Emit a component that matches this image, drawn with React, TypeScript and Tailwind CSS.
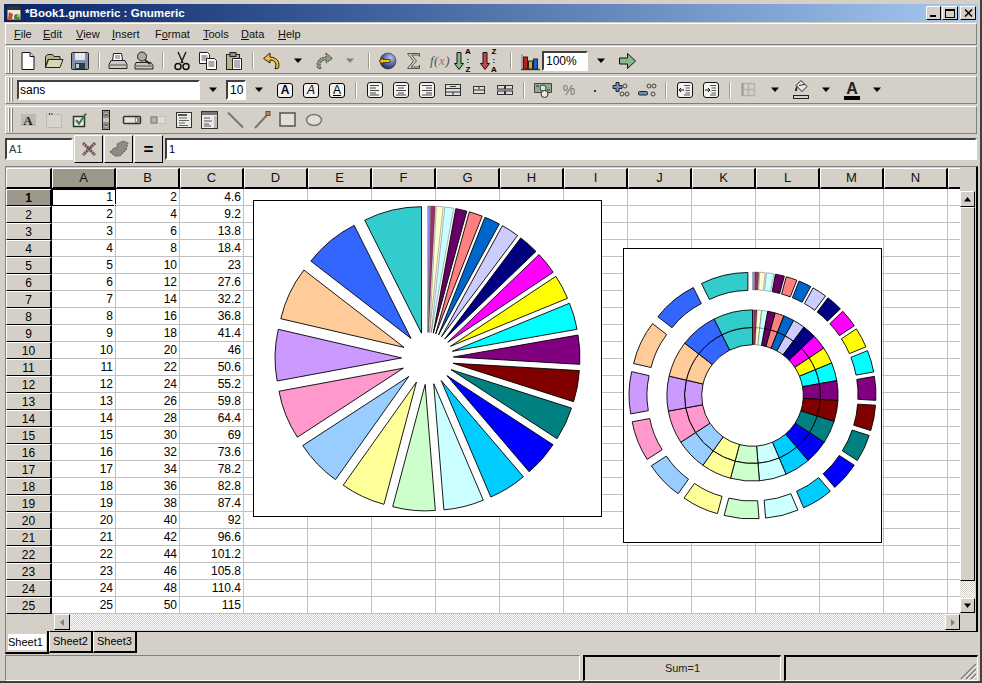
import React from 'react';

const colors = ['#9999ff','#993366','#ffffcc','#ccffff','#660066','#ff8080','#0066cc','#ccccff','#000080','#ff00ff','#ffff00','#00ffff','#800080','#800000','#008080','#0000ff','#00ccff','#ccffff','#ccffcc','#ffff99','#99ccff','#ff99cc','#cc99ff','#ffcc99','#3366ff','#33cccc'];
const total = 351;

// annular wedge, angles in degrees clockwise from 12 o'clock
function wedge(cx: number, cy: number, r0: number, r1: number, a0: number, a1: number, off: number) {
  const rad = (d: number) => (d * Math.PI) / 180;
  const mid = rad((a0 + a1) / 2);
  const ox = cx + off * Math.sin(mid);
  const oy = cy - off * Math.cos(mid);
  const pt = (r: number, a: number) => `${(ox + r * Math.sin(rad(a))).toFixed(2)} ${(oy - r * Math.cos(rad(a))).toFixed(2)}`;
  if (r0 === 0) return `M${ox.toFixed(2)} ${oy.toFixed(2)}L${pt(r1, a0)}A${r1} ${r1} 0 0 1 ${pt(r1, a1)}Z`;
  return `M${pt(r0, a0)}L${pt(r1, a0)}A${r1} ${r1} 0 0 1 ${pt(r1, a1)}L${pt(r0, a1)}A${r0} ${r0} 0 0 0 ${pt(r0, a0)}Z`;
}

function Slices({ cx, cy, r0, r1, off }: { cx: number; cy: number; r0: number; r1: number; off: number }) {
  let a = 0;
  return (
    <>
      {colors.map((c, i) => {
        const a0 = a;
        a += ((i + 1) / total) * 360;
        return <path key={i} d={wedge(cx, cy, r0, r1, a0, a, off)} fill={c} stroke="#000" strokeWidth={i < 4 ? 0.3 : 0.9} />;
      })}
    </>
  );
}

const raised = 'border border-t-white border-l-white border-r-black border-b-black';
const sunken = 'border-2 border-t-[#404040] border-l-[#404040] border-r-white border-b-white';
const sans = "font-['Liberation_Sans',Arial,sans-serif]";

function S({ children }: { children: React.ReactNode }) {
  return <svg width="22" height="22" viewBox="0 0 22 22">{children}</svg>;
}

function Btn({ children, className }: { children?: React.ReactNode; className?: string }) {
  return <div className={`flex items-center justify-center h-[26px] w-[26px] ${className ?? ''}`}>{children}</div>;
}

function Drop({ off, className }: { off?: boolean; className?: string }) {
  return (
    <Btn className={className}>
      <svg width="10" height="6" viewBox="0 0 10 6"><path d="M1 0.500h8L5 5z" fill={off ? '#808080' : '#000'} /></svg>
    </Btn>
  );
}

function Sep() {
  return (
    <div className="flex items-center justify-center w-[12px]">
      <div className="w-[2px] h-[16px] bg-white border-l border-[#a09c94]" />
    </div>
  );
}

function Handle() {
  return (
    <div className="flex gap-[1px] ml-[2px] mr-[2px] h-[24px] w-[5px]">
      <div className="w-[2px] bg-white border-r border-[#808080]" />
      <div className="w-[2px] bg-white border-r border-[#808080]" />
    </div>
  );
}

function Bar({ children, className }: { children: React.ReactNode; className?: string }) {
  return (
    <div className={`flex items-center h-[28px] w-[972px] ml-[1px] border-t border-l border-white border-b border-r border-b-[#808080] border-r-[#808080] ${className ?? ''}`}>
      <Handle />
      {children}
    </div>
  );
}

const NewIcon = <S><path d="M5 2.500h8l4 4v13H5z" fill="#fff" stroke="#111" /><path d="M13 2.500v4h4" fill="#ddd" stroke="#111" /></S>;
const OpenIcon = <S><path d="M2.500 17.500v-11l2-2h5l1.500 2h6v3h-12l-2.500 8z" fill="#b5b38c" stroke="#222" /><path d="M2.500 17.500l3-8h14.500l-3 8z" fill="#d9d7b4" stroke="#222" /></S>;
const SaveIcon = <S><rect x="2.500" y="2.500" width="17" height="17" rx="1" fill="#7f93ad" stroke="#222" /><rect x="6" y="3" width="10" height="7" fill="#e8e8e8" /><rect x="6" y="13" width="10" height="6" fill="#333a48" /><rect x="7" y="14" width="3" height="4" fill="#c8c8c8" /></S>;
const PrintIcon = <S><path d="M6.500 3.500h8l1 7h-10z" fill="#fff" stroke="#222" /><path d="M8 6h5M8 8h5" stroke="#666" /><path d="M4 10.500h14l2 4v4H2v-4z" fill="#c9c7c0" stroke="#222" /><path d="M3 15h16" stroke="#555" /></S>;
const PreviewIcon = <S><path d="M3 12.500h15l2 3v3.500H2v-3.500z" fill="#c9c7c0" stroke="#222" /><path d="M3 16h16" stroke="#555" /><circle cx="9" cy="6.500" r="4.500" fill="#a8aca4" stroke="#222" /><path d="M12 10l5 4" stroke="#222" strokeWidth="2" /></S>;
const CutIcon = <S><path d="M7 2l5 11M15 2l-5 11" stroke="#222" strokeWidth="1.500" fill="none" /><circle cx="7" cy="16.500" r="3" fill="none" stroke="#111" strokeWidth="1.500" /><circle cx="15" cy="16.500" r="3" fill="none" stroke="#111" strokeWidth="1.500" /></S>;
const CopyIcon = <S><path d="M2.500 2.500h8l2 2v9h-10z" fill="#fff" stroke="#222" /><path d="M4.500 6h6M4.500 8h6M4.500 10h6" stroke="#555" /><path d="M9.500 8.500h8l2 2v9h-10z" fill="#fff" stroke="#222" /><path d="M11.500 12h6M11.500 14h6M11.500 16h6" stroke="#555" /></S>;
const PasteIcon = <S><rect x="3.500" y="4.500" width="13" height="15" fill="#bdb48c" stroke="#222" /><rect x="7" y="2.500" width="6" height="4" fill="#8f8f86" stroke="#222" /><path d="M9.500 8.500h9v11h-9z" fill="#fff" stroke="#222" /><path d="M11 11h6M11 13h6M11 15h6M11 17h6" stroke="#666" /></S>;
const UndoIcon = <S><path d="M9 3L2.500 8.500 9 13v-3c3.500 0 5.500 1.500 6 5l-1 4 3.500-1c1.500-5-.5-10.500-8.500-11z" fill="#f4bc28" stroke="#222" /></S>;
const RedoIcon = <S><path d="M13 3l6.500 5.500L13 13v-3c-3.500 0-5.500 1.500-6 5l1 4-3.500-1C3 13 5 7.500 13 7z" fill="#8a9a7c" stroke="#4a4a40" strokeDasharray="2 1" /></S>;
const GlobeIcon = (
  <S>
    <defs><radialGradient id="gl" cx="0.65" cy="0.3" r="0.8"><stop offset="0" stopColor="#b6c4ea" /><stop offset="0.6" stopColor="#4a5a94" /><stop offset="1" stopColor="#1a1f48" /></radialGradient></defs>
    <circle cx="11" cy="11" r="8" fill="url(#gl)" stroke="#222" strokeWidth="0.500" />
    <path d="M2 11l4-3v1.500h7v3H6V14z" fill="#f2c200" stroke="#222" strokeWidth="0.700" />
  </S>
);
const SigmaIcon = <S><path d="M4.500 3.500h12v3l-1-1.500H8.500l5 6-5.500 6h7.500l1-2v3.500h-12l6-7.500z" fill="#d8d8c8" stroke="#55554a" /></S>;
const FxIcon = (
  <div className="font-['Liberation_Serif',serif] italic text-[13px] text-[#505050] whitespace-nowrap tracking-[0.5px]">
    f(<span className="text-[#c06060]">x</span>)
  </div>
);
const sortLetter = "font-['Liberation_Sans',Arial,sans-serif] text-[8px] font-bold leading-none";
function SortIcon({ top, bottom, fill }: { top: string; bottom: string; fill: string }) {
  return (
    <div className="flex items-center w-[22px] h-[22px] -ml-[2px]">
      <svg width="10" height="20" viewBox="0 0 10 20"><path d="M3 1.500h4v11h2.500L5 18.500.5 12.500H3z" fill={fill} stroke="#111" /></svg>
      <div className="flex flex-col items-center ml-[1px] gap-[2px]">
        <span className={sortLetter}>{top}</span>
        <span className={`${sortLetter} text-[6px] -my-[1px]`}>:</span>
        <span className={sortLetter}>{bottom}</span>
      </div>
    </div>
  );
}
const ChartIcon = <S><path d="M2 19.500h19" stroke="#444" strokeWidth="1.500" /><rect x="4.500" y="7" width="4" height="12" fill="#b82020" stroke="#222" /><rect x="9.500" y="11" width="4" height="8" fill="#f0a020" stroke="#222" /><rect x="14.500" y="9" width="4" height="10" fill="#2060c0" stroke="#222" /><path d="M3 4v15" stroke="#777" /></S>;
const GoIcon = <S><path d="M3.500 8h8V3.500l8 7.500-8 7.500V14h-8z" fill="#88b888" stroke="#111" /></S>;

function LetterBtn({ className }: { className: string }) {
  return (
    <div className="flex items-center justify-center w-[26px]">
      <div className={`w-[16px] h-[15px] bg-white/70 border border-black rounded-[3px] flex items-center justify-center text-[12px] leading-none text-black ${sans} ${className}`}>A</div>
    </div>
  );
}
function AlignBtn({ lines }: { lines: string }) {
  return (
    <Btn>
      <svg width="18" height="18" viewBox="0 0 18 18">
        <rect x="1.500" y="1.500" width="15" height="15" rx="2.500" fill="#f4f3f0" stroke="#111" />
        <path d={lines} stroke="#444" />
      </svg>
    </Btn>
  );
}
const MergeIcon = <S><rect x="3.500" y="5.500" width="15" height="11" fill="#ddd" stroke="#333" /><path d="M3.500 9.500h15M3.500 13h15M11 13v3.500M8 7.500h6" stroke="#333" /></S>;
const SplitIcon = <S><rect x="5.500" y="7.500" width="11" height="7" fill="#ddd" stroke="#333" /><path d="M5.500 11h11M11 7.500v3" stroke="#333" /></S>;
const Split2Icon = <S><rect x="3.500" y="6.500" width="7" height="3.500" fill="#ddd" stroke="#333" /><rect x="11.500" y="6.500" width="7" height="3.500" fill="#ddd" stroke="#333" /><rect x="3.500" y="12" width="7" height="3.500" fill="#ddd" stroke="#333" /><rect x="11.500" y="12" width="7" height="3.500" fill="#ddd" stroke="#333" /></S>;
const MoneyIcon = <S><path d="M2.500 4.500h17v9h-17z" fill="#8cab8c" stroke="#444" /><circle cx="11" cy="9" r="3" fill="#d8e4d0" stroke="#444" /><circle cx="12.500" cy="15" r="3.500" fill="#e8e8e8" stroke="#333" /><path d="M4 7h3M15 11h3" stroke="#333" /></S>;
const PercentIcon = <div className={`text-[14px] leading-none text-[#777] ${sans}`}>%</div>;
const DotIcon = <div className="w-[2px] h-[2px] bg-[#333] mt-[2px]" />;
function DecIcon({ plus }: { plus: boolean }) {
  return (
    <S>
      {plus
        ? <path d="M6 3.500h3v3h3v3H9v3H6v-3H3v-3h3z" fill="#6f8fb8" stroke="#223" />
        : <rect x="2.500" y="12.500" width="9" height="3.500" rx="1" fill="#6f8fb8" stroke="#223" />}
      <g fill="none" stroke="#444">
        {plus ? <><circle cx="15" cy="7" r="2" /><circle cx="12" cy="15" r="2" /><circle cx="17" cy="15" r="2" /></>
          : <><circle cx="13" cy="7" r="2" /><circle cx="18" cy="7" r="2" /><circle cx="17" cy="15" r="2" /></>}
      </g>
    </S>
  );
}
function IndentIcon({ flip }: { flip?: boolean }) {
  return (
    <Btn>
      <svg width="18" height="18" viewBox="0 0 18 18">
        <rect x="1.500" y="1.500" width="15" height="15" rx="2.500" fill="#f4f3f0" stroke="#111" />
        <path d="M8 4.500h6M9.500 7h4.500M9.500 9.500h4.500M9.500 12h4.500M8 14h6" stroke="#555" />
        <path d={flip ? 'M3 9h5M6 7l2 2-2 2' : 'M3 9h5M5 7L3 9l2 2'} stroke="#111" fill="none" />
      </svg>
    </Btn>
  );
}
const BordersIcon = <S><path d="M4.500 4.500h12v12h-12zM10.500 4.500v12M4.500 10.500h12" fill="none" stroke="#b4b2aa" strokeWidth="1.500" /><path d="M4.500 4.500v12" stroke="#9a9890" strokeWidth="2" /></S>;
const FillIcon = <S><path d="M11 1.500l6 6-5 5-6-6z" fill="#e8e8e8" stroke="#222" /><path d="M9 6.500l5.500-1" stroke="#222" /><path d="M7.500 6L5 10v2h2z" fill="#333" /><rect x="3.500" y="16.500" width="15" height="3" fill="#d4d0c8" stroke="#222" /></S>;
const FontColorIcon = (
  <div className="flex flex-col items-center w-[18px]">
    <span className={`text-[16px] font-bold leading-[15px] text-[#222] ${sans}`}>A</span>
    <div className="w-[16px] h-[4px] bg-black" />
  </div>
);

const LabelIcon = <div className="w-[15px] h-[12px] bg-[#bdb9b0] flex items-center justify-center font-['Liberation_Serif',serif] font-bold text-[13px] leading-none text-[#222]">A</div>;
const FrameIcon = <S><path d="M3.500 5.500h15v13h-15z" fill="#d8d4cc" stroke="#bbb8b0" /><rect x="6" y="3" width="5" height="3" fill="#d4d0c8" /><path d="M6.500 4v2M9 4v2" stroke="#333" /></S>;
const CheckIcon = <S><rect x="4.500" y="7.500" width="11" height="10" fill="#e8e8e0" stroke="#333" strokeWidth="1.500" /><path d="M7 11l3 3.500 7-10" stroke="#3a7a3a" strokeWidth="2" fill="none" /></S>;
const SpinIcon = <S><rect x="7.500" y="1.500" width="7" height="19" fill="#c8c4bc" stroke="#222" /><rect x="9" y="3" width="4" height="5" fill="#e8e8e8" stroke="#555" /><rect x="9" y="14" width="4" height="5" fill="#e8e8e8" stroke="#555" /><path d="M9.500 6.500l1.500-2 1.500 2zM9.500 15.500l1.500 2 1.500-2z" fill="#000" /></S>;
const ScrollIcon = <S><rect x="2.500" y="7.500" width="17" height="7" rx="1" fill="#e4e2dc" stroke="#333" strokeWidth="1.500" /><rect x="14" y="8" width="5" height="6" fill="#888" /><path d="M15.500 9.500v3" stroke="#fff" /></S>;
const SliderIcon = <S><rect x="3.500" y="7.500" width="15" height="7" fill="#dedcd6" stroke="#c4c2ba" /><rect x="4" y="8" width="6" height="6" fill="#b4b2aa" stroke="#777" /></S>;
const ListIcon = <S><rect x="3.500" y="3.500" width="15" height="15" fill="#ecebe8" stroke="#333" /><rect x="5" y="5" width="9" height="2" fill="#555" /><path d="M6 9h8M6 11.500h10M6 14h6M6 16.500h9" stroke="#666" /></S>;
const ComboIcon = <S><rect x="2.500" y="2.500" width="16" height="17" fill="#ecebe8" stroke="#333" /><rect x="3" y="3" width="15" height="3" fill="#777" /><rect x="15" y="7" width="3" height="12" fill="#bbb" /><path d="M5 9h6M5 12h8M5 15h5M5 17h7" stroke="#555" /></S>;
const LineIcon = <S><path d="M3 3.500l15 15" stroke="#77756e" strokeWidth="2" /></S>;
const ArrowIcon = <S><path d="M4 19L17 5" stroke="#77756e" strokeWidth="2" /><rect x="15" y="2.500" width="4" height="4" fill="#b88a50" stroke="#555" /></S>;
const RectIcon = <S><rect x="3" y="4" width="15" height="13" fill="#e0ded8" stroke="#55534e" strokeWidth="1.500" /></S>;
const EllipseIcon = <S><ellipse cx="11" cy="11" rx="7.500" ry="5.500" fill="#e0ded8" stroke="#77756e" strokeWidth="1.500" /></S>;

const columns = ['A','B','C','D','E','F','G','H','I','J','K','L','M','N'];
const rows = Array.from({ length: 25 }, (_, i) => i + 1);
const fmtC = (n: number) => String(Math.round(n * 46) / 10);

function ColHead({ label, active }: { label: string; active?: boolean }) {
  return (
    <div className={`w-[64px] h-full flex items-center justify-center border-t border-l border-t-white border-l-white border-r-2 border-r-black border-b-2 border-b-black text-[13px] text-[#111] ${active ? 'bg-[#9d988c]' : ''}`}>{label}</div>
  );
}

function GridRow({ n }: { n: number }) {
  return (
    <div className="flex h-[17px]">
      <div className={`w-[46px] flex items-center justify-center border-t border-l border-t-white border-l-white border-r-2 border-r-black border-b border-b-black text-[12px] leading-none ${n === 1 ? 'bg-[#9d988c] font-bold' : 'bg-[#d4d0c8]'}`}>{n}</div>
      {columns.map((c, i) => (
        <div key={c} className={`relative w-[64px] flex items-center justify-end pr-[2px] border-r border-b border-[#c0c0c0] text-[12px] leading-none bg-white ${n === 1 && i === 0 ? 'outline-2 -outline-offset-1 outline-black' : ''}`}>
          {i === 0 ? n : i === 1 ? n * 2 : i === 2 ? fmtC(n) : ''}
          {n === 1 && i === 0 && <div className="absolute right-[-3px] bottom-[-3px] w-[4px] h-[4px] bg-black border border-white" />}
        </div>
      ))}
      <div className="w-[12px] border-b border-[#c0c0c0] bg-white" />
    </div>
  );
}

const checker = 'bg-[repeating-conic-gradient(#d4d0c8_0_25%,#ffffff_0_50%)] bg-[length:2px_2px]';

function ScrollBtn({ d, grey, className }: { d: string; grey?: boolean; className: string }) {
  return (
    <div className={`bg-[#d4d0c8] flex items-center justify-center ${raised} ${className}`}>
      <svg width="9" height="9" viewBox="0 0 9 9"><path d={d} fill={grey ? '#808080' : '#000'} /></svg>
    </div>
  );
}

export default function App() {
  const menus: [string, string, string, number][] = [
    ['', 'F', 'ile', 29], ['', 'E', 'dit', 33], ['', 'V', 'iew', 36], ['', 'I', 'nsert', 43],
    ['F', 'o', 'rmat', 48], ['', 'T', 'ools', 38], ['', 'D', 'ata', 37], ['', 'H', 'elp', 30],
  ];
  return (
    <div className={`relative w-[982px] h-[683px] overflow-hidden bg-[#d4d0c8] pt-[4px] pl-[4px] border-r-2 border-b-2 border-[#404040] text-black ${sans}`}>
      {/* title bar */}
      <div className="flex items-center w-[974px] h-[18px] mb-[1px] bg-gradient-to-r from-[#0a246a] to-[#a6caf0] text-white">
        <svg className="ml-[2px]" width="16" height="16" viewBox="0 0 16 16">
          <rect x="1" y="1" width="14" height="14" fill="#e8e8e8" stroke="#222" />
          <rect x="1" y="1" width="14" height="4" fill="#333" />
          <path d="M3 7l4 2-1 5H2z" fill="#d84830" />
          <circle cx="11" cy="12" r="3" fill="#3a8a50" />
          <path d="M11 9a3 3 0 0 1 3 3h-3z" fill="#e0b020" />
        </svg>
        <span className="ml-[3px] text-[11.6px] font-bold leading-none whitespace-nowrap">*Book1.gnumeric : Gnumeric</span>
        <div className="ml-auto flex mr-[2px]">
          <div className={`w-[15px] h-[14px] bg-[#d4d0c8] relative ${raised}`}><div className="absolute left-[3px] bottom-[2px] w-[6px] h-[2px] bg-black" /></div>
          <div className={`w-[16px] h-[14px] ml-[1px] bg-[#d4d0c8] flex items-center justify-center ${raised}`}><div className="w-[10px] h-[9px] border border-black border-t-2" /></div>
          <div className={`w-[16px] h-[14px] ml-[2px] bg-[#d4d0c8] flex items-center justify-center ${raised}`}>
            <svg width="9" height="8" viewBox="0 0 9 8"><path d="M1 0.500l7 7M8 0.500l-7 7" stroke="#000" strokeWidth="1.500" /></svg>
          </div>
        </div>
      </div>

      {/* menu */}
      <div className="flex items-center w-[972px] h-[22px] ml-[1px] mb-[1px] pl-[8px] border border-t-white border-l-white border-b-[#808080] border-r-[#808080] text-[11px] text-[#111]">
        {menus.map(([a, u, b, w]) => (
          <span key={u + b} style={{ width: w }}>{a}<span className="underline">{u}</span>{b}</span>
        ))}
      </div>

      {/* standard toolbar */}
      <Bar className="mb-[2px] pt-[1px]">
        <Btn>{NewIcon}</Btn><Btn>{OpenIcon}</Btn><Btn>{SaveIcon}</Btn><Sep />
        <Btn>{PrintIcon}</Btn><Btn>{PreviewIcon}</Btn><Sep />
        <Btn>{CutIcon}</Btn><Btn>{CopyIcon}</Btn><Btn>{PasteIcon}</Btn><Sep />
        <Btn>{UndoIcon}</Btn><Drop /><Btn>{RedoIcon}</Btn><Drop off /><Sep />
        <Btn>{GlobeIcon}</Btn><Btn>{SigmaIcon}</Btn><Btn>{FxIcon}</Btn>
        <Btn><SortIcon top="A" bottom="Z" fill="#88b888" /></Btn>
        <Btn><SortIcon top="Z" bottom="A" fill="#cc4444" /></Btn><Sep />
        <Btn>{ChartIcon}</Btn>
        <div className={`w-[46px] h-[20px] -ml-[1px] pl-[2px] flex items-center bg-white text-[12px] ${sunken}`}>100%</div>
        <Drop /><Btn>{GoIcon}</Btn>
      </Bar>

      {/* format toolbar */}
      <Bar className="mb-[2px]">
        <div className={`w-[183px] h-[20px] ml-[2px] pl-[1px] flex items-center bg-white text-[12px] ${sunken}`}>sans</div>
        <Drop />
        <div className={`w-[20px] h-[20px] pl-[2px] flex items-center bg-white text-[12px] ${sunken}`}>10</div>
        <Drop />
        <LetterBtn className="font-bold" /><LetterBtn className="italic" /><LetterBtn className="underline" /><Sep />
        <AlignBtn lines="M4 4.500h9M4 7h6M4 9.500h9M4 12h6M4 14h9" />
        <AlignBtn lines="M4 4.500h10M6 7h6M4 9.500h10M6 12h6M4 14h10" />
        <AlignBtn lines="M4 4.500h10M8 7h6M4 9.500h10M8 12h6M4 14h10" />
        <Btn>{MergeIcon}</Btn><Btn>{SplitIcon}</Btn><Btn>{Split2Icon}</Btn><Sep />
        <Btn>{MoneyIcon}</Btn><Btn>{PercentIcon}</Btn><Btn>{DotIcon}</Btn>
        <Btn><DecIcon plus /></Btn><Btn><DecIcon plus={false} /></Btn><Sep />
        <IndentIcon /><IndentIcon flip /><Sep />
        <Btn>{BordersIcon}</Btn><Drop /><Btn>{FillIcon}</Btn>
        <Drop className="-ml-[1px]" /><Btn>{FontColorIcon}</Btn><Drop className="-ml-[1px]" />
      </Bar>

      {/* object toolbar */}
      <Bar className="mb-[1px]">
        <Btn>{LabelIcon}</Btn><Btn>{FrameIcon}</Btn><Btn>{CheckIcon}</Btn><Btn>{SpinIcon}</Btn>
        <Btn>{ScrollIcon}</Btn><Btn>{SliderIcon}</Btn><Btn>{ListIcon}</Btn><Btn>{ComboIcon}</Btn>
        <Btn>{LineIcon}</Btn><Btn>{ArrowIcon}</Btn><Btn>{RectIcon}</Btn><Btn>{EllipseIcon}</Btn>
      </Bar>

      {/* formula bar */}
      <div className="flex items-center h-[28px] mb-[3px] w-[974px] pl-[1px]">
        <div className={`w-[68px] h-[22px] pl-[2px] flex items-center bg-white text-[11px] text-[#333] ${sunken}`}>A1</div>
        <div className={`w-[29px] h-[28px] ml-[1px] flex items-center justify-center ${raised}`}>
          <svg width="18" height="18" viewBox="0 0 18 18"><path d="M3 3l12 12M15 3L3 15" stroke="#6a5050" strokeWidth="3" strokeDasharray="2 0.600" /></svg>
        </div>
        <div className={`w-[29px] h-[28px] ml-[1px] flex items-center justify-center ${raised}`}>
          <svg width="22" height="20" viewBox="0 0 22 20"><path d="M2 13l4-4h3V5l6-3 5 2-2 7-6 6H7z" fill="#8c8c84" stroke="#55554e" strokeDasharray="2 1" /></svg>
        </div>
        <div className={`w-[29px] h-[28px] ml-[1px] flex items-center justify-center ${raised}`}>
          <span className="text-[17px] font-bold leading-none">=</span>
        </div>
        <div className={`flex-1 h-[22px] ml-[2px] mr-[1px] pl-[2px] flex items-center bg-white text-[11px] ${sunken}`}>1</div>
      </div>

      {/* sheet */}
      <div className="flex w-[973px] ml-[1px] pt-[1px] pr-[1px] border-t border-l border-t-[#808080] border-l-[#808080] border-r-2 border-r-black">
        <div className="w-[954px]">
          <div className="flex h-[21px]">
            <div className="w-[46px] h-full border-t border-l border-t-white border-l-white border-r-2 border-r-black border-b-2 border-b-black" />
            {columns.map((c, i) => <ColHead key={c} label={c} active={i === 0} />)}
            <div className="w-[12px] h-full border-t border-l border-t-white border-l-white border-b-2 border-b-black" />
          </div>
          <div className="relative">
            {rows.map((n) => <GridRow key={n} n={n} />)}
            {/* charts float over the cells */}
            <div className="absolute left-[247px] top-[11px] w-[349px] h-[317px] bg-white border border-black">
              <svg width="347" height="315" viewBox="0 0 347 315">
                <Slices cx={173.500} cy={157.500} r0={0} r1={126.500} off={26} />
              </svg>
            </div>
            <div className="absolute left-[617px] top-[59px] w-[259px] h-[295px] bg-white border border-black">
              <svg width="257" height="293" viewBox="0 0 257 293">
                <Slices cx={128.500} cy={146.500} r0={50.800} r1={68} off={0} />
                <Slices cx={128.500} cy={146.500} r0={68} r1={85.600} off={0} />
                <Slices cx={128.500} cy={146.500} r0={85.600} r1={103.500} off={20} />
              </svg>
            </div>
          </div>
          <div className="flex h-[17px]">
            <div className="w-[48px]" />
            <ScrollBtn d="M6 1v7L2 4.500z" grey className="w-[16px] h-[16px]" />
            <div className={`flex-1 h-[16px] ${checker}`} />
            <ScrollBtn d="M3 1v7l4-3.500z" grey className="w-[15px] h-[16px]" />
          </div>
        </div>
        <div className="flex flex-col w-[15px]">
          <div className="h-[23px]" />
          <ScrollBtn d="M4.500 2L8 6.500H1z" className="h-[16px]" />
          <div className={`h-[374px] ${raised}`} />
          <div className={`h-[17px] ${checker}`} />
          <ScrollBtn d="M1 2.500h7L4.500 7z" className="h-[15px]" />
          <div className="flex-1" />
        </div>
      </div>

      {/* sheet tabs */}
      <div className="flex h-[23px] w-[973px] ml-[1px] mb-[1px] text-[11px] leading-none">
        <div className="w-[44px] h-[23px] pt-[3px] pl-[2px] pr-[1px] pb-[2px] border-b-2 border-r-2 border-l border-l-[#808080] border-black">
          <div className="w-full h-full bg-white flex items-center">Sheet1</div>
        </div>
        <div className="w-[44px] h-[22px] flex items-center pl-[3px] border-t border-t-black border-r-2 border-b-2 border-black border-l border-l-white">Sheet2</div>
        <div className="w-[44px] h-[22px] flex items-center pl-[3px] border-t border-t-black border-r-2 border-b-2 border-black border-l border-l-white">Sheet3</div>
        <div className="flex-1 border-t border-black" />
      </div>

      {/* status bar */}
      <div className="flex h-[26px] w-[974px] ml-[1px] text-[11px] text-[#222]">
        <div className="w-[575px] border-t border-t-[#808080] border-l border-l-[#808080] border-r border-r-white border-b border-b-white" />
        <div className="w-[198px] ml-[3px] flex items-center justify-center border-t-2 border-l-2 border-t-black border-l-black border-r border-r-white border-b border-b-white">Sum=1</div>
        <div className="relative w-[194px] ml-[3px] border-t-2 border-l-2 border-t-black border-l-black border-r border-r-white border-b border-b-white">
          <svg className="absolute right-0 bottom-0" width="17" height="17" viewBox="0 0 17 17">
            <path d="M16 1L1 16M16 6L6 16M16 11L11 16" stroke="#808080" strokeWidth="1.500" />
            <path d="M17 2L2 17M17 7L7 17M17 12L12 17" stroke="#fff" />
          </svg>
        </div>
      </div>
    </div>
  );
}
